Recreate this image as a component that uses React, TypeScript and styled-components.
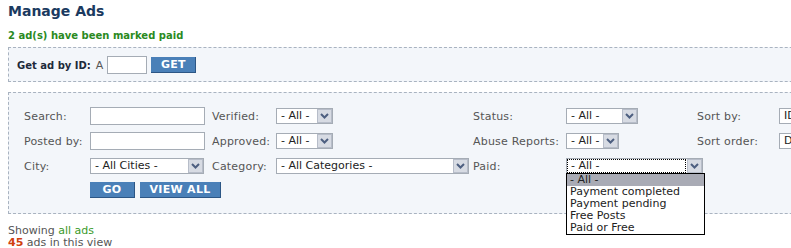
import styled, { createGlobalStyle } from "styled-components";

const GlobalStyle = createGlobalStyle`
  html, body {
    margin: 0;
    padding: 0;
    overflow: hidden;
    background: #ffffff;
  }
  body {
    padding: 0 8px;
    font-family: "DejaVu Sans", Verdana, sans-serif;
    color: #555555;
  }
`;

const paidOptions = [
  "- All -",
  "Payment completed",
  "Payment pending",
  "Free Posts",
  "Paid or Free",
];

const Arrow = () => (
  <ArrowBox>
    <svg width="9" height="6" viewBox="0 0 9 6">
      <path d="M1 1 L4.5 4.5 L8 1" fill="none" stroke="#4d5f80" strokeWidth="2" />
    </svg>
  </ArrowBox>
);

type SelectProps = {
  value: string;
  width: number;
  focused?: boolean;
  children?: React.ReactNode;
};

const Select = ({ value, width, focused, children }: SelectProps) => (
  <SelectBox $width={width}>
    <SelectText $focused={focused}>{value}</SelectText>
    <Arrow />
    {children}
  </SelectBox>
);

const App = () => {
  return (
    <>
      <GlobalStyle />
      <Page>
        <Title>Manage Ads</Title>
        <Notice>2 ad(s) have been marked paid</Notice>

        <Panel $compact>
          <IdRow>
            <BoldLabel>Get ad by ID:</BoldLabel>
            <Prefix>A</Prefix>
            <TextInput $width={40} />
            <Button $width={45}>GET</Button>
          </IdRow>
        </Panel>

        <Panel>
          <FilterGrid>
            <Label>Search:</Label>
            <TextInput $width={115} />
            <Label>Verified:</Label>
            <Select value="- All -" width={57} />
            <Label>Status:</Label>
            <Select value="- All -" width={72} />
            <Label>Sort by:</Label>
            <Select value="ID" width={100} />

            <Label>Posted by:</Label>
            <TextInput $width={115} />
            <Label>Approved:</Label>
            <Select value="- All -" width={57} />
            <Label>Abuse Reports:</Label>
            <Select value="- All -" width={53} />
            <Label>Sort order:</Label>
            <Select value="Descending" width={100} />

            <Label>City:</Label>
            <Select value="- All Cities -" width={114} />
            <Label>Category:</Label>
            <Select value="- All Categories -" width={193} />
            <Label>Paid:</Label>
            <Select value="- All -" width={137} focused>
              <DropList>
                {paidOptions.map((opt, i) => (
                  <Option key={opt} $active={i === 0}>
                    {opt}
                  </Option>
                ))}
              </DropList>
            </Select>
            <span />
            <span />

            <span />
            <Buttons>
              <Button $width={45}>GO</Button>
              <Button $width={81}>VIEW ALL</Button>
            </Buttons>
          </FilterGrid>
        </Panel>

        <Summary>
          <div>
            Showing <Green>all ads</Green>
          </div>
          <div>
            <Count>45</Count> ads in this view
          </div>
        </Summary>
      </Page>
    </>
  );
};

export default App;

const Page = styled.div`
  width: 900px;
  padding-top: 2px;
`;

const Title = styled.h1`
  margin: 0;
  font-size: 14px;
  line-height: 18px;
  font-weight: bold;
  color: #1b3a60;
`;

const Notice = styled.div`
  margin-top: 10px;
  font-size: 10px;
  line-height: 12px;
  font-weight: bold;
  color: #2a8a1e;
`;

const Panel = styled.div<{ $compact?: boolean }>`
  margin-top: ${(p) => (p.$compact ? "5px" : "10px")};
  padding: ${(p) => (p.$compact ? "8px 8px 7px 8px" : "14px 15px 13px 15px")};
  border: 1px dashed #a9b3c0;
  background: #f3f6fa;
`;

const IdRow = styled.div`
  display: flex;
  align-items: center;
`;

const BoldLabel = styled.span`
  font-size: 10px;
  font-weight: bold;
  color: #1e2a3a;
`;

const Prefix = styled.span`
  margin: 0 4px 0 5px;
  font-size: 11px;
  color: #555555;
`;

const TextInput = styled.div<{ $width: number }>`
  box-sizing: border-box;
  width: ${(p) => p.$width}px;
  height: 18px;
  border: 1px solid #a5acb5;
  background: #ffffff;
  margin-right: 4px;
`;

const Button = styled.div<{ $width: number }>`
  box-sizing: border-box;
  width: ${(p) => p.$width}px;
  height: 16px;
  background: #4a80b8;
  border-right: 1px solid #2c5685;
  border-bottom: 1px solid #2c5685;
  color: #ffffff;
  font-size: 11px;
  font-weight: bold;
  line-height: 15px;
  text-align: center;
  letter-spacing: 0.3px;
`;

const FilterGrid = styled.div`
  display: grid;
  grid-template-columns: 66px 122px 64px 197px 93px 131px 82px auto;
  grid-auto-rows: 18px;
  row-gap: 7px;
  align-items: center;
`;

const Label = styled.span`
  font-size: 11px;
  color: #555555;
  letter-spacing: 0.2px;
  white-space: nowrap;
`;

const SelectBox = styled.div<{ $width: number }>`
  position: relative;
  box-sizing: border-box;
  width: ${(p) => p.$width}px;
  height: 16px;
  border: 1px solid #a5acb5;
  background: #ffffff;
  display: flex;
  align-items: center;
`;

const SelectText = styled.span<{ $focused?: boolean }>`
  flex: 1;
  box-sizing: border-box;
  height: 12px;
  margin: 0 2px 0 1px;
  padding-left: 3px;
  font-size: 11px;
  line-height: 12px;
  color: #222222;
  white-space: nowrap;
  overflow: hidden;
  outline: ${(p) => (p.$focused ? "1px dotted #000000" : "none")};
`;

const ArrowBox = styled.span`
  box-sizing: border-box;
  width: 15px;
  height: 14px;
  margin-right: 0;
  border: 1px solid #b7bdc9;
  background: #d7dbe3;
  display: flex;
  align-items: center;
  justify-content: center;
`;

const DropList = styled.div`
  position: absolute;
  top: 14px;
  left: -1px;
  width: 139px;
  box-sizing: border-box;
  border: 1px solid #000000;
  background: #ffffff;
  z-index: 2;
`;

const Option = styled.div<{ $active?: boolean }>`
  height: 12px;
  padding-left: 3px;
  font-size: 11px;
  line-height: 12px;
  color: #222222;
  background: ${(p) => (p.$active ? "#a9abb5" : "#ffffff")};
  white-space: nowrap;
`;

const Buttons = styled.div`
  grid-column: 2 / span 3;
  display: flex;
  gap: 5px;
  align-self: start;
`;

const Summary = styled.div`
  margin-top: 11px;
  font-size: 11px;
  line-height: 12px;
  color: #555555;
`;

const Green = styled.span`
  color: #3a9a2a;
`;

const Count = styled.span`
  color: #d0400e;
  font-weight: bold;
`;
